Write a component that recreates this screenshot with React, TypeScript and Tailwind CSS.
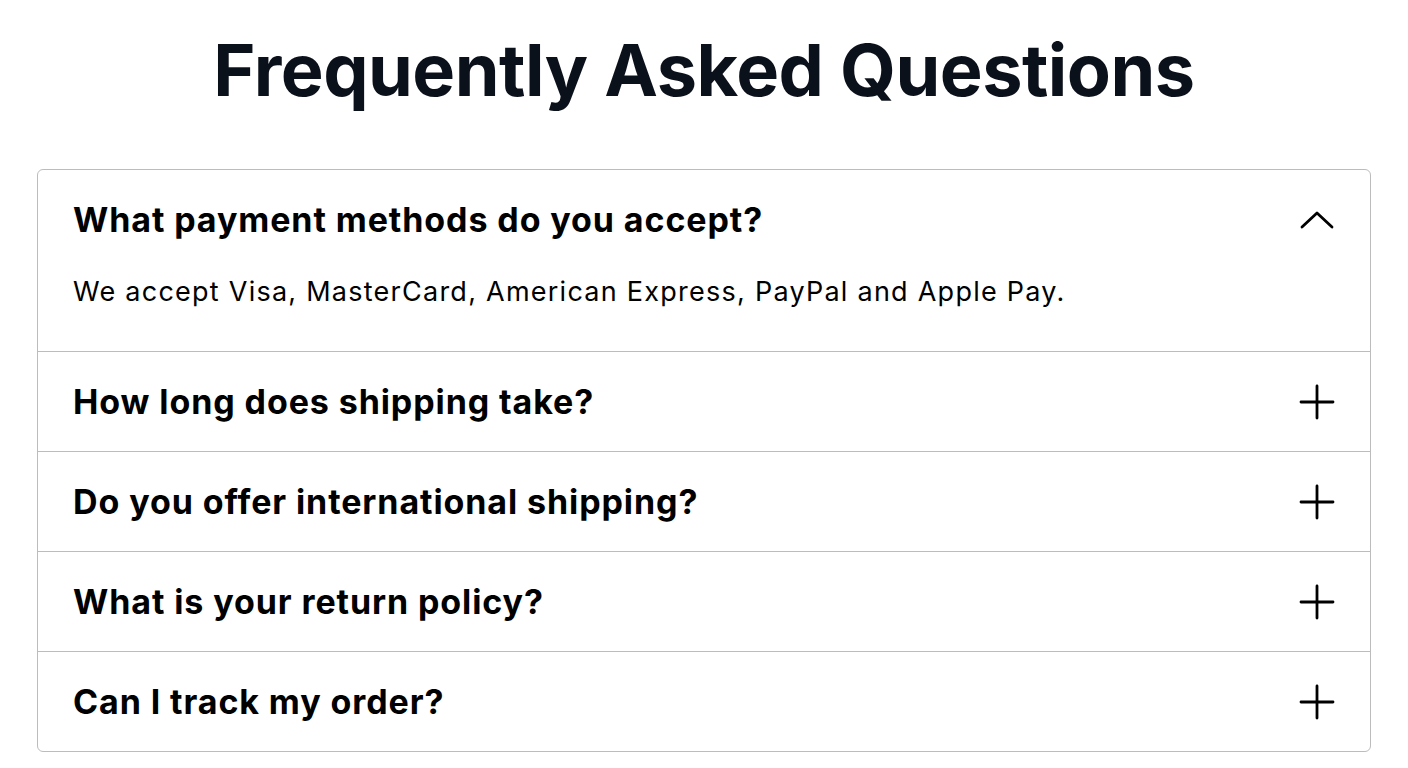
import { useState } from "react";

const faqs = [
  {
    q: "What payment methods do you accept?",
    a: "We accept Visa, MasterCard, American Express, PayPal and Apple Pay.",
  },
  { q: "How long does shipping take?", a: "Standard shipping takes 3-5 business days." },
  { q: "Do you offer international shipping?", a: "Yes, we ship to most countries worldwide." },
  { q: "What is your return policy?", a: "You can return any item within 30 days of delivery." },
  { q: "Can I track my order?", a: "Yes, a tracking link is emailed once your order ships." },
];

function PlusIcon() {
  return (
    <svg width="36" height="36" viewBox="0 0 36 36" fill="none" stroke="currentColor" strokeWidth="2.8" strokeLinecap="round">
      <path d="M18 2v32M2 18h32" />
    </svg>
  );
}

function ChevronUp() {
  return (
    <svg width="36" height="20" viewBox="0 0 36 20" fill="none" stroke="currentColor" strokeWidth="2.8" strokeLinecap="round" strokeLinejoin="round">
      <path d="M3 17L18 3l15 14" />
    </svg>
  );
}

export default function App() {
  const [open, setOpen] = useState<number | null>(0);

  return (
    <div className="min-h-screen bg-white px-[37px] pt-[22px] font-['Inter','Noto_Sans',sans-serif]">
      <h1 className="text-center text-[72px] font-bold leading-[96px] tracking-[-0.5px] text-[#0b111b]">
        Frequently Asked Questions
      </h1>
      <div className="mt-[51px] overflow-hidden rounded-[6px] border border-[#bcbcbc]">
        {faqs.map((item, i) => {
          const isOpen = open === i;
          return (
            <div key={item.q} className={i > 0 ? "border-t border-[#bcbcbc]" : ""}>
              <button
                onClick={() => setOpen(isOpen ? null : i)}
                className="flex h-[99px] w-full items-center justify-between pl-[35px] pr-[35px] text-left text-black"
              >
                <span className="text-[34px] font-bold tracking-[0.9px]">{item.q}</span>
                {isOpen ? <ChevronUp /> : <PlusIcon />}
              </button>
              {isOpen && (
                <p className="px-[35px] pb-[37px] pt-[1px] text-[27px] leading-[44px] tracking-[1.25px] text-black">{item.a}</p>
              )}
            </div>
          );
        })}
      </div>
    </div>
  );
}
